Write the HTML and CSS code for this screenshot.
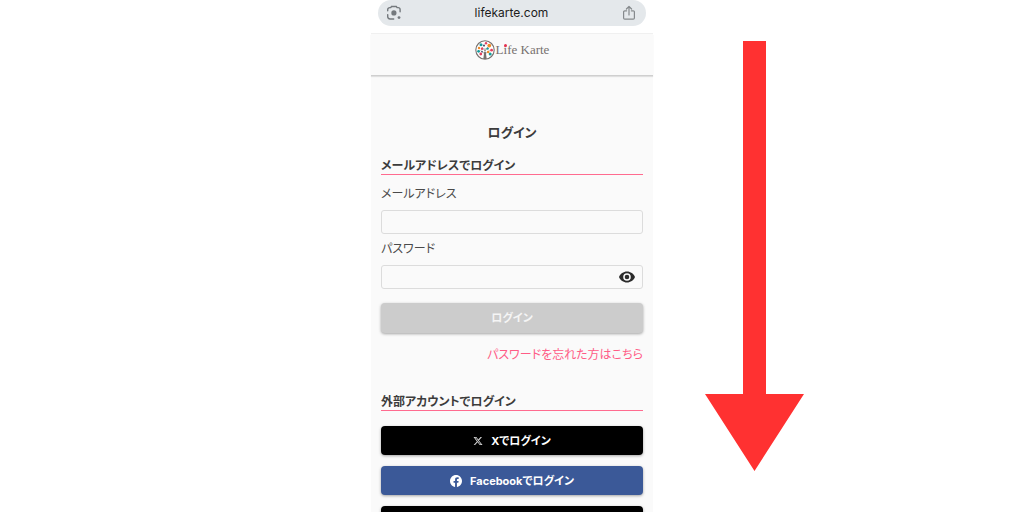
FILE: index.html
```html
<!DOCTYPE html>
<html lang="ja">
<head>
<meta charset="utf-8">
<meta name="viewport" content="width=device-width, initial-scale=1">
<title>ログイン | Life Karte</title>
<link rel="stylesheet" href="styles.css">
</head>
<body>
<div class="stage">
  <div class="phone">
    <div class="address-bar">
      <svg class="bar-icon" viewBox="0 0 16 16" aria-hidden="true">
        <path fill="none" stroke="#74797d" stroke-width="1.400" stroke-linecap="round" d="M1.700 5.800V4.600a2 2 0 0 1 2-2h1l.8-1.100h4.800l.8 1.100h1a2 2 0 0 1 2 2v2.200M1.700 9.600v2a2.400 2.400 0 0 0 2.400 2.400h3.600"/>
        <circle cx="7.9" cy="7.9" r="2.6" fill="#74797d"/>
        <circle cx="13" cy="12.6" r="1.4" fill="#74797d"/>
      </svg>
      <span class="address">lifekarte.com</span>
      <svg class="bar-icon" viewBox="0 0 16 16" aria-hidden="true">
        <path fill="none" stroke="#85898c" stroke-width="1.2" stroke-linecap="round" stroke-linejoin="round" d="M5.6 5.8H3.8a1.2 1.2 0 0 0-1.2 1.2v6a1.2 1.2 0 0 0 1.2 1.2h8.4a1.2 1.2 0 0 0 1.2-1.2V7a1.2 1.2 0 0 0-1.2-1.2h-1.8M8 10V1.6M5.4 4 8 1.5 10.6 4"/>
      </svg>
    </div>
    <div class="page">
      <header class="header">
        <a class="brand" href="#" aria-label="Life Karte">
          <svg class="brand-mark" viewBox="0 0 20 20" aria-hidden="true">
            <circle cx="10" cy="10" r="9.2" fill="#fff" stroke="#77716f" stroke-width="1.1"/>
            <path d="M10 18V8M10 14l-4.500-3.500M10 14l4.500-3.500M10 11 7 7M10 11l3-4" fill="none" stroke="#77716f" stroke-width=".6"/>
            <path d="m9.200 12-.9 7h3.400l-.9-7z" fill="#77716f"/>
            <g fill="#169c9c"><circle cx="6" cy="4.800" r="1.500"/><circle cx="12.600" cy="8.600" r="1.200"/><circle cx="3.600" cy="11.300" r="1.400"/><circle cx="15.200" cy="14" r="1.500"/></g>
            <g fill="#f08b27"><circle cx="14.300" cy="5.600" r="1.900"/><circle cx="4" cy="8" r="1.200"/><circle cx="13.200" cy="12" r="1.300"/></g>
            <g fill="#e5405e"><circle cx="11" cy="3.200" r="1.200"/><circle cx="16.600" cy="10.200" r="1.400"/><circle cx="5.800" cy="14" r="1.400"/><circle cx="7" cy="8.800" r="1.200"/></g>
            <g fill="#4e5872"><circle cx="9" cy="5.600" r="1.100"/><circle cx="7" cy="11.600" r=".9"/></g>
          </svg>
          <span class="brand-name">L<span class="brand-i">i</span>fe Karte</span>
        </a>
      </header>
      <main class="main">
        <h1 class="title">ログイン</h1>
        <h2 class="section-title">メールアドレスでログイン</h2>
        <form class="form">
          <label class="label" for="email">メールアドレス</label>
          <input class="input" id="email" type="email">
          <label class="label" for="password">パスワード</label>
          <div class="password">
            <input class="input" id="password" type="password">
            <button class="reveal" type="button" aria-label="パスワードを表示">
              <svg class="eye" viewBox="0 0 16 12" aria-hidden="true">
                <path fill="#2b2b2b" fill-rule="evenodd" d="M8 .5C4.400.500 1.300 2.800 0 6c1.300 3.200 4.400 5.500 8 5.500s6.700-2.300 8-5.500C14.700 2.800 11.600.500 8 .5zM8 9.800a3.800 3.800 0 1 1 0-7.600 3.800 3.800 0 0 1 0 7.600zM8 3.700a2.300 2.300 0 1 0 0 4.600 2.300 2.300 0 0 0 0-4.600z"/>
              </svg>
            </button>
          </div>
          <button class="button button-submit" type="submit" disabled>ログイン</button>
        </form>
        <a class="forgot" href="#">パスワードを忘れた方はこちら</a>
        <h2 class="section-title">外部アカウントでログイン</h2>
        <div class="providers">
          <button class="button button-dark" type="button">
            <svg class="x-icon" viewBox="0 0 24 24" aria-hidden="true"><path fill="#d8d8d8" d="M18.200 2.200h3.400l-7.300 8.300 8.600 11.300h-6.700l-5.200-6.900-6 6.900H1.600l7.800-8.900L1.200 2.200H8l4.700 6.300zm-1.200 17.600h1.900L7.100 4.100h-2z"/></svg>
            Xでログイン
          </button>
          <button class="button button-facebook" type="button">
            <svg class="fb-icon" viewBox="0 0 24 24" aria-hidden="true"><path fill="#fff" d="M24 12.070C24 5.400 18.600 0 12 0S0 5.400 0 12.070c0 6.030 4.390 11.020 10.130 11.930v-8.440H7.080v-3.490h3.050V9.410c0-3.020 1.790-4.690 4.530-4.690 1.310 0 2.680.24 2.680.24v2.970h-1.510c-1.490 0-1.960.93-1.960 1.890v2.250h3.330l-.53 3.490h-2.800V24C19.610 23.090 24 18.100 24 12.070z"/></svg>
            Facebookでログイン
          </button>
          <button class="button button-dark" type="button" aria-label="外部アカウント"></button>
        </div>
      </main>
    </div>
  </div>
  <svg class="arrow" viewBox="0 0 100 430" aria-hidden="true">
    <path fill="#ff3131" d="M38 0h23v353h38L49.500 430 0 353h38z"/>
  </svg>
</div>
</body>
</html>
```
FILE: styles.css
```css
* {
  box-sizing: border-box;
}

body {
  margin: 0;
  background: #fff;
  color: #3c3c3c;
  font-family: Inter, "Noto Sans CJK JP", sans-serif;
  font-size: 12px;
  line-height: 16px;
  font-feature-settings: "palt";
}

h1,
h2 {
  margin: 0;
}

.stage {
  display: grid;
  grid-template-columns: 1fr minmax(240px, 282px) 1fr;
  height: 100vh;
  overflow: hidden;
}

.phone {
  grid-column: 2;
}

.address-bar {
  display: flex;
  align-items: center;
  justify-content: space-between;
  margin: 0 7px 7px;
  padding: 5px 9px 5px 8px;
  border-radius: 13px;
  background: #e4e8eb;
  color: #1c1c1c;
}

.bar-icon {
  width: 16px;
  height: 16px;
}

.page {
  background: #fafafa;
  border-top: 1px solid #f0f0f0;
}

.header {
  display: flex;
  justify-content: center;
  padding: 6px 0 15px;
  border-bottom: 1px solid #cfcfcf;
  box-shadow: 0 1px 1px rgba(0, 0, 0, 0.1);
}

.brand {
  display: flex;
  align-items: center;
  gap: 1px;
  color: #77716f;
  text-decoration: none;
}

.brand-mark {
  width: 20px;
  height: 20px;
}

.brand-name {
  font-family: "Liberation Serif", serif;
  font-size: 13px;
}

.brand-i {
  position: relative;
}

.brand-i::after {
  content: "";
  position: absolute;
  top: 2px;
  left: 0;
  width: 3px;
  height: 3px;
  border-radius: 50%;
  background: #e5304f;
}

.main {
  display: flex;
  flex-direction: column;
  padding: 47px 10px 24px;
}

.title {
  margin-bottom: 16px;
  font-size: 13px;
  line-height: 18px;
  text-align: center;
}

.section-title {
  border-bottom: 1px solid #ff6b8f;
  font-size: 12px;
  line-height: 17px;
}

.form {
  display: flex;
  flex-direction: column;
}

.label {
  margin: 11px 0 8px;
  color: #4a4a4a;
}

.input {
  display: block;
  width: 100%;
  height: 24px;
  padding: 0 8px;
  border: 1px solid #dcdcdc;
  border-radius: 3px;
  background: #fafafa;
  font: inherit;
}

.password {
  position: relative;
}

.label ~ .label {
  margin-top: 7px;
}

.reveal {
  position: absolute;
  top: 0;
  right: 0;
  display: flex;
  align-items: center;
  height: 100%;
  padding: 0 8px;
  border: 0;
  background: none;
}

.eye {
  width: 16px;
  height: 12px;
}

.button {
  display: flex;
  align-items: center;
  justify-content: center;
  height: 29px;
  padding: 0 8px;
  border: 0;
  border-radius: 4px;
  box-shadow: 0 1px 3px rgba(0, 0, 0, 0.35);
  color: #fff;
  font: inherit;
  font-size: 11px;
  font-weight: 700;
  font-feature-settings: inherit;
}

.button-submit {
  height: 30px;
  margin-top: 14px;
  background: #ccc;
  color: #f5f5f5;
}

.button-dark {
  background: #000;
}

.button-facebook {
  background: #3b5998;
}

.forgot {
  align-self: flex-end;
  margin: 14px 0 30px;
  color: #ff5c86;
  text-decoration: none;
}

.providers {
  display: flex;
  flex-direction: column;
  gap: 11px;
  margin-top: 15px;
}

.x-icon {
  width: 10px;
  height: 10px;
  margin-right: 8px;
}

.fb-icon {
  width: 12px;
  height: 12px;
  margin-right: 8px;
}

.arrow {
  width: 100px;
  height: 430px;
  margin: 41px 0 0 52px;
}
```
